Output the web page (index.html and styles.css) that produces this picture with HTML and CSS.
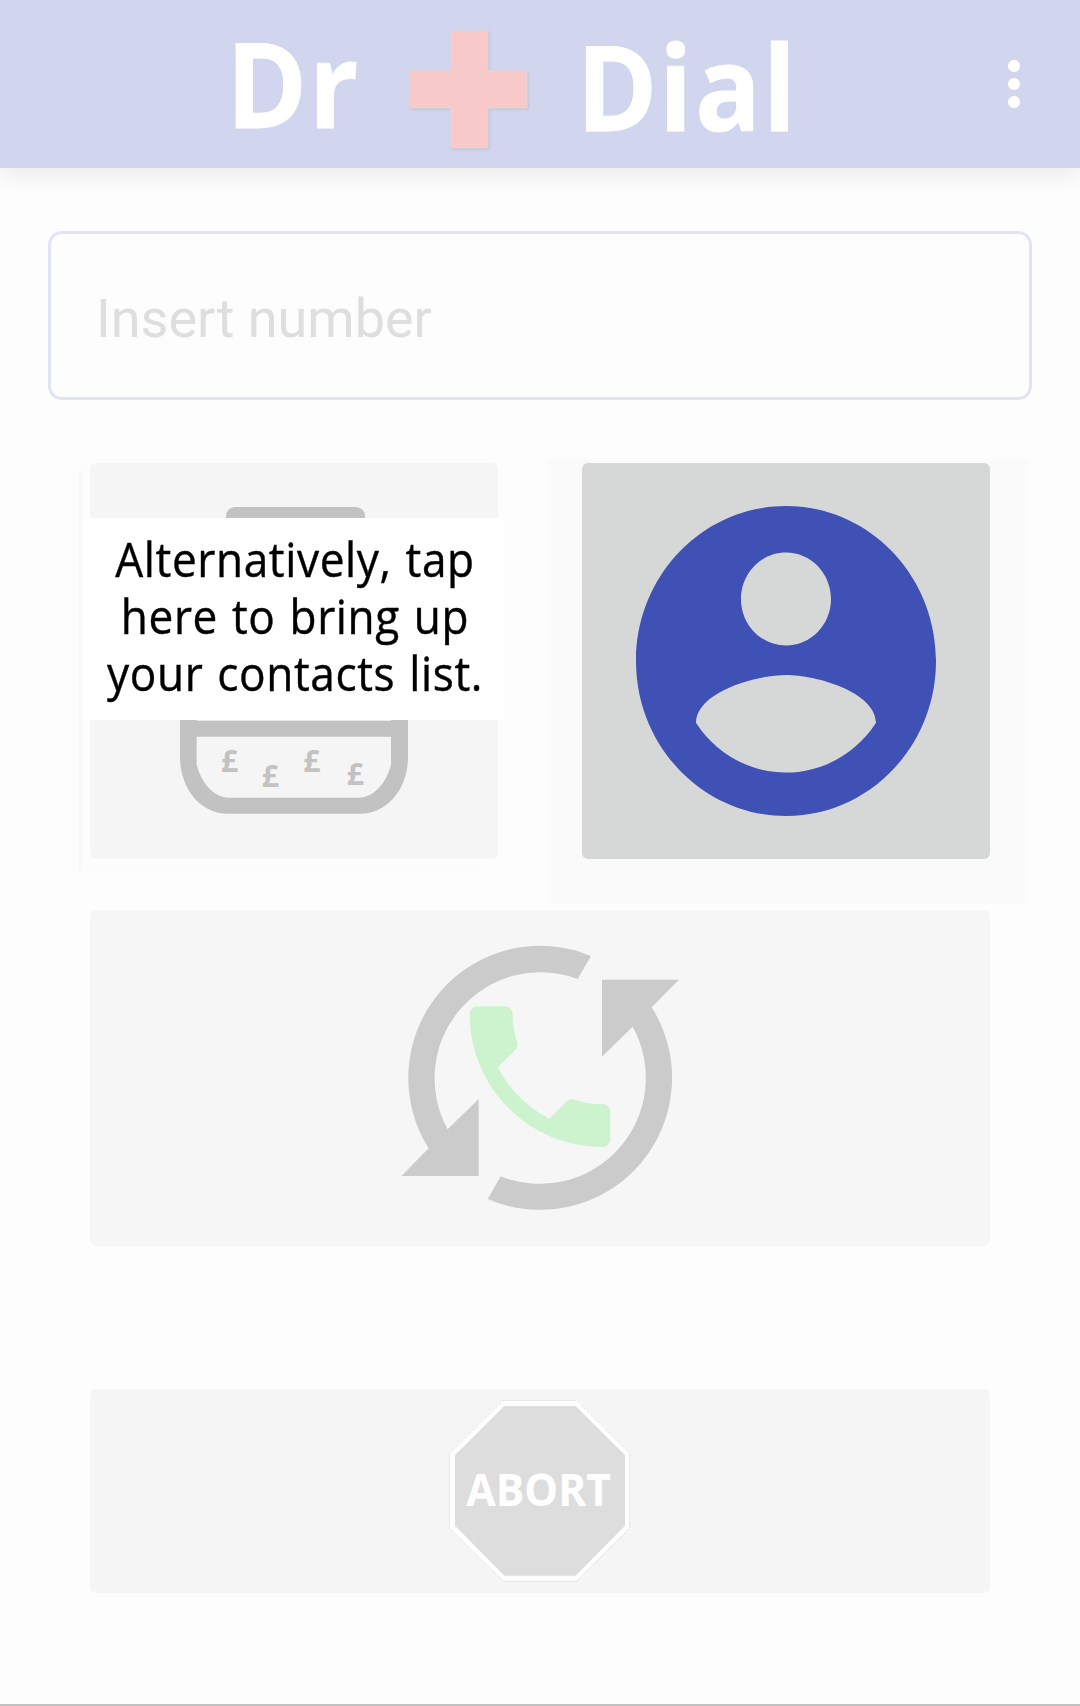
FILE: index.html
```html
<!DOCTYPE html>
<html lang="en">
<head>
<meta charset="utf-8">
<title>Dr Dial</title>
<link rel="stylesheet" href="styles.css">
</head>
<body>
<header class="app-bar">
  <svg class="logo" viewBox="220 0 600 168" role="img" aria-label="Dr Dial">
    <text class="logo-text" transform="scale(.92 1)" x="245.9 335.7" y="128">Dr</text>
    <path class="cross" d="M450.7 31h37.3v39.7h39v37.3h-39v40h-37.3v-40h-41v-37.3h41z"/>
    <text class="logo-text" transform="scale(.92 1)" x="626.7 716.4 755.4 829.1" y="130.7">Dial</text>
  </svg>
  <svg class="menu" viewBox="0 0 16 52">
    <circle cx="8" cy="8" r="6.1"/><circle cx="8" cy="26" r="6.1"/><circle cx="8" cy="44" r="6.1"/>
  </svg>
</header>
<main class="content">
  <div class="number-field">Insert number</div>
  <div class="row">
    <div class="slot slot-credit">
      <div class="tile tile-faded">
        <svg class="art-credit" viewBox="60 39 1224 1188">
          <path class="grey" d="M468 300V198a27 27 0 0 1 27-27h363a27 27 0 0 1 27 27v102z"/>
          <path class="grey" fill-rule="evenodd" d="M330 300h684v620c0 95-60 171-144 171H474c-84 0-144-76-144-171zM380 860v85c14 50 48 98 98 98h387c50 0 84-48 98-98v-85zM380 350v462h583v-462z"/>
          <g class="pounds">
            <text x="453" y="965">£</text><text x="575" y="1010">£</text>
            <text x="700" y="965">£</text><text x="830" y="1005">£</text>
          </g>
        </svg>
      </div>
      <p class="hint"><span>Alternatively, tap</span><span>here to bring up</span><span>your contacts list.</span></p>
    </div>
    <div class="slot slot-contacts">
      <div class="tile tile-active">
        <svg class="art-person" viewBox="2 2 20 20" preserveAspectRatio="none">
          <path d="M12 2C6.48 2 2 6.48 2 12s4.48 10 10 10 10-4.48 10-10S17.52 2 12 2zm0 3c1.66 0 3 1.34 3 3s-1.34 3-3 3-3-1.34-3-3 1.34-3 3-3zm0 14.2c-2.5 0-4.71-1.28-6-3.22.03-1.99 4-3.08 6-3.08 1.99 0 5.97 1.09 6 3.08-1.29 1.94-3.5 3.22-6 3.22z"/>
        </svg>
      </div>
    </div>
  </div>
  <div class="tile tile-redial">
    <svg class="art-redial" viewBox="60 129 840 808">
      <path class="arrow" d="M633 168A396 396 0 0 0 146 745L64 828H296V597L203 688A318 318 0 0 1 593 237z"/>
      <path class="arrow" d="M323 897A396 396 0 0 0 815 322L897 239H666V470L758 380A318 318 0 0 1 362 829z"/>
      <path class="handset" transform="translate(198.6 248.6) scale(23.45)" d="M6.62 10.79c1.44 2.83 3.76 5.14 6.59 6.59l2.2-2.2c.27-.27.67-.36 1.02-.24 1.12.37 2.33.57 3.57.57.55 0 1 .45 1 1V20c0 .55-.45 1-1 1-9.39 0-17-7.61-17-17 0-.55.45-1 1-1h3.5c.55 0 1 .45 1 1 0 1.25.2 2.45.57 3.57.11.35.03.74-.25 1.02l-2.2 2.2z"/>
    </svg>
  </div>
  <div class="tile tile-abort">
    <svg class="art-abort" viewBox="87 60 546 546">
      <path class="sign-edge" d="M249 63H471L629 220V445L471 603H249L90 445V220z"/>
      <path class="sign-rim" d="M249 63H471L628 220V445L471 602H249L90 445V220z"/>
      <path class="sign-face" d="M253 78H467L615 225V437L467 587H253L105 437V225z"/>
      <text class="sign-text" x="139" y="377" textLength="434" lengthAdjust="spacingAndGlyphs">ABORT</text>
    </svg>
  </div>
</main>
</body>
</html>
```
FILE: styles.css
```css
* { box-sizing: border-box; }

body {
  margin: 0;
  height: 1706px;
  overflow: hidden;
  background: #fdfdfd;
  border-bottom: 2px solid #c0c0c0;
  font-family: "Open Sans", "Noto Sans", sans-serif;
}

svg { display: block; }

.app-bar {
  display: flex;
  align-items: center;
  justify-content: space-between;
  height: 168px;
  padding: 0 58px 0 220px;
  background: #d1d5ee;
  box-shadow: 0 8px 20px rgba(0, 0, 0, 0.07);
}

.logo { width: 600px; height: 168px; }
.logo-text {
  font-weight: 700;
  font-size: 119px;
  fill: #fff;
  stroke: #fff;
  stroke-width: 0.8;
}
.cross {
  fill: #f8c9c9;
  stroke: #dcd8e0;
  stroke-width: 1;
  filter: drop-shadow(1px 1px 1px #c0c1c8);
}
.menu { width: 16px; height: 52px; fill: #fff; }

.content { padding: 63px 48px 0; }

.number-field {
  display: flex;
  align-items: center;
  height: 169px;
  padding: 5px 0 0 45px;
  border: 3px solid #e1e5f3;
  border-radius: 14px;
  font-family: Roboto, sans-serif;
  font-size: 54px;
  color: #dedede;
}

.row {
  display: flex;
  justify-content: space-between;
  margin: 59px 4px 0 31px;
}

.slot { height: 445px; }

.slot-credit {
  position: relative;
  width: 404px;
  height: 413px;
  padding: 4px 0 0 11px;
  background:
    linear-gradient(#fafafa, #fafafa) 0 11px / 4px 402px no-repeat,
    linear-gradient(#fafafa, #fafafa) 0 412px / 404px 1px no-repeat;
}

.slot-contacts { width: 480px; padding: 4px 34px 0; background: #fafafa; }

.tile {
  display: flex;
  align-items: center;
  justify-content: center;
  border-radius: 6px;
}

.tile-faded { width: 408px; height: 396px; background: #f5f5f5; }
.art-credit { width: 408px; height: 396px; }
.grey, .pounds { fill: #c2c2c2; }
.pounds { font-weight: 700; font-size: 90px; }

.hint {
  position: absolute;
  left: 4px;
  top: 59px;
  width: 422px;
  height: 202px;
  margin: 0;
  padding: 13px 0 0 2px;
  background: #fff;
  color: #000;
  font-size: 47px;
  line-height: 57px;
  letter-spacing: 0.65px;
  word-spacing: 2px;
  text-align: center;
  white-space: nowrap;
  -webkit-text-stroke: 0.4px #000;
}
.hint span { display: block; transform: scaleX(0.94); }

.tile-active { width: 408px; height: 396px; background: #d6d8d7; }
.art-person { width: 300px; height: 310px; fill: #3f51b5; }

.tile-redial { height: 336px; margin: 6px 42px 0; background: #f6f6f6; }
.art-redial { width: 280px; height: 269.33px; }
.arrow { fill: #cbcbcb; }
.handset { fill: #cdf3ce; }

.tile-abort { height: 204px; margin: 143px 42px 0; background: #f5f5f5; }
.art-abort { width: 182px; height: 182px; }
.sign-edge { fill: none; stroke: #c8c8c8; stroke-width: 3; stroke-dasharray: 3 3; }
.sign-rim { fill: #fff; }
.sign-face { fill: #dddddd; }
.sign-text { font-weight: 700; font-size: 133px; fill: #fff; }
```
